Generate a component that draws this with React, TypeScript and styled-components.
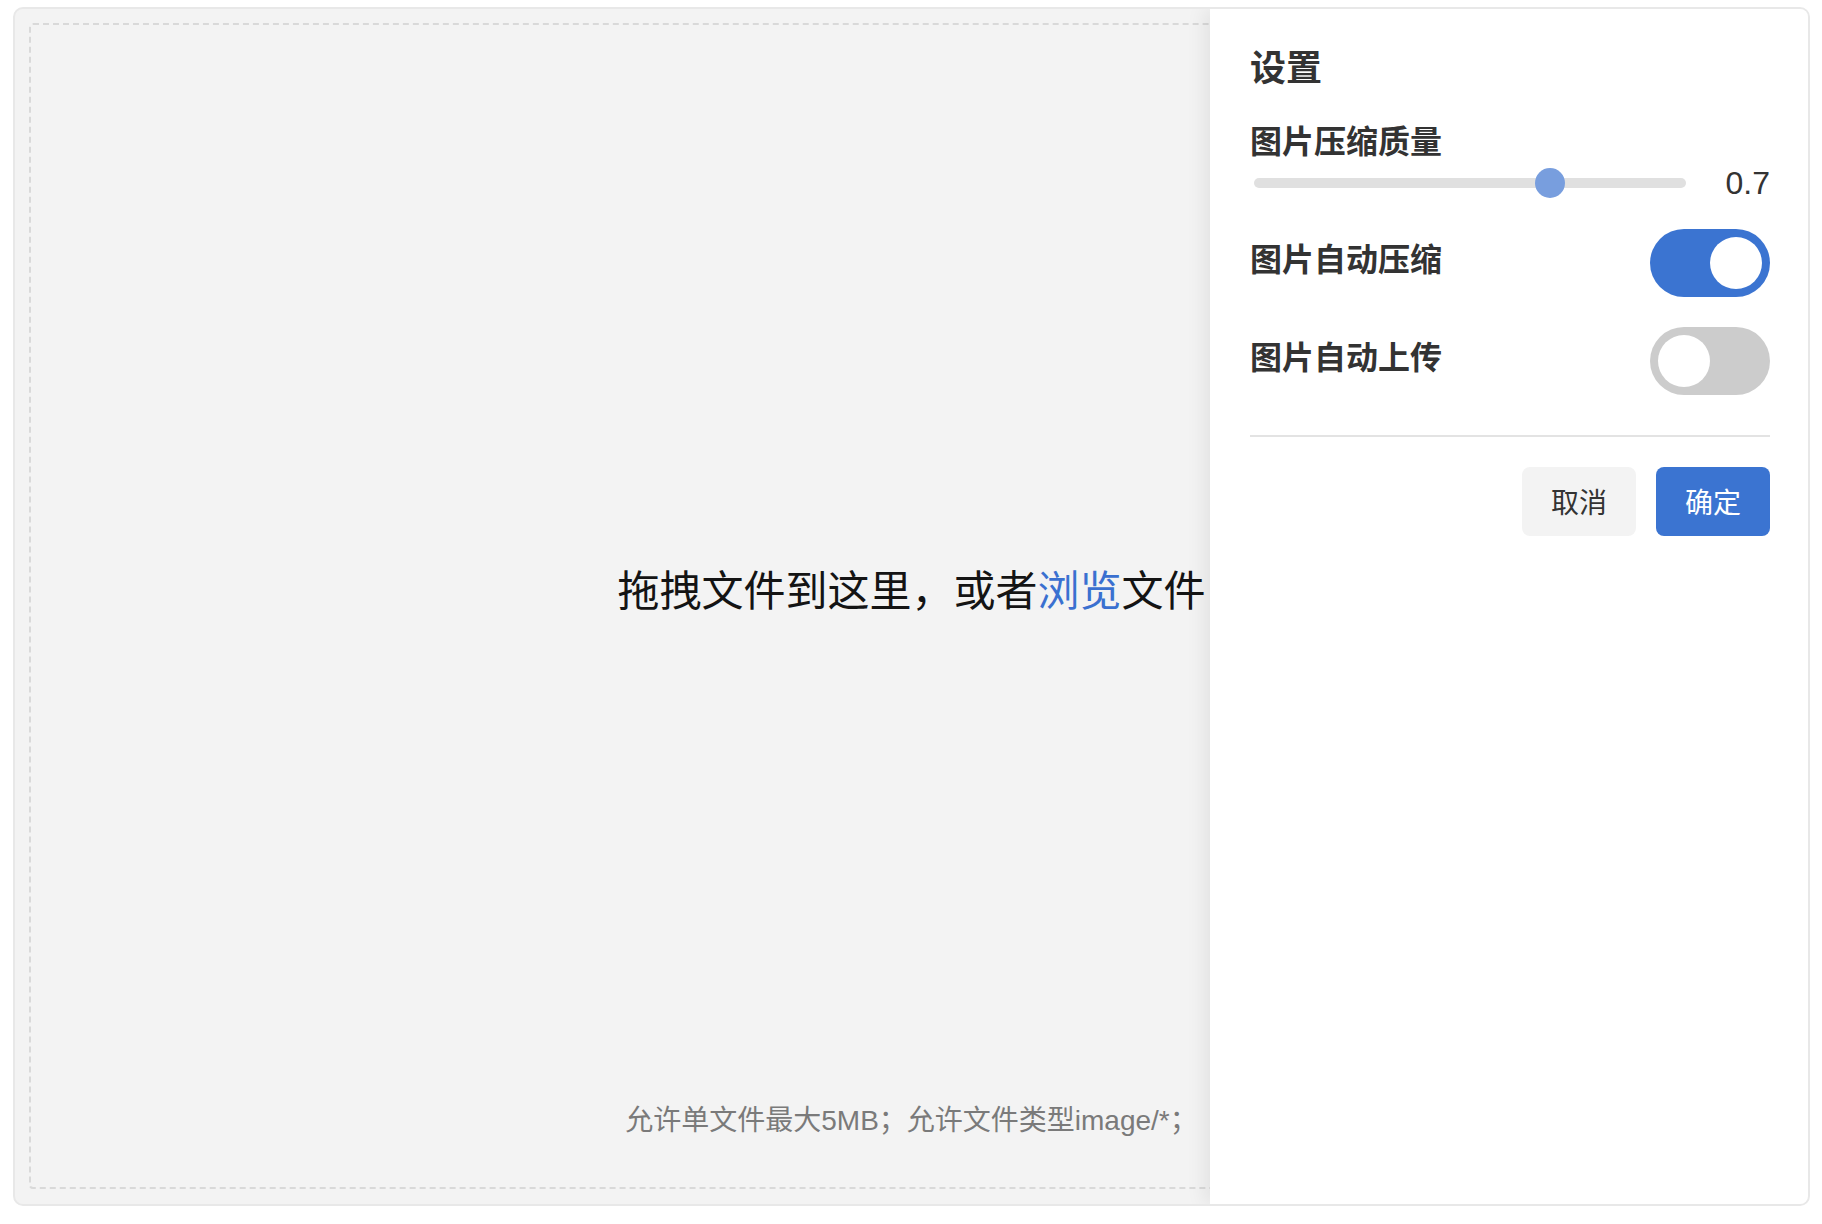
import React, { useState } from "react";
import styled, { createGlobalStyle } from "styled-components";

const GlobalStyle = createGlobalStyle`
  html, body { margin: 0; padding: 0; background: #ffffff; }
  body { font-family: "Liberation Sans", "Noto Sans CJK SC", "Noto Sans", sans-serif; }
  * { box-sizing: border-box; }
`;

const Page = styled.div`
  padding: 7px 12px 0 13px;
`;

const Frame = styled.div`
  position: relative;
  width: 1797px;
  height: 1199px;
  border: 2px solid #e8e8e8;
  border-radius: 10px;
  background: #f3f3f3;
  overflow: hidden;
  display: flex;
  padding: 14px 14px 15px 14px;
`;

const DropZone = styled.div`
  flex: 1;
  border: 2px dashed #d9d9d9;
  border-radius: 4px;
  display: grid;
  grid-template-rows: 1fr auto;
`;

const DropMain = styled.div`
  padding-top: 58px;
  display: flex;
  align-items: center;
  justify-content: center;
  font-size: 42px;
  line-height: 56px;
  color: #141414;
`;

const Link = styled.span`
  color: #3a70d0;
`;

const Hint = styled.div`
  padding-bottom: 46px;
  text-align: center;
  font-size: 28px;
  line-height: 40px;
  color: #7a7a7a;
`;

const Drawer = styled.aside`
  position: absolute;
  top: 0;
  right: 0;
  bottom: 0;
  width: 598px;
  background: #ffffff;
  box-shadow: -6px 0 18px rgba(0, 0, 0, 0.07);
  padding: 35px 38px 0 40px;
  display: flex;
  flex-direction: column;
`;

const Title = styled.h2`
  margin: 0;
  font-size: 36px;
  line-height: 50px;
  font-weight: 700;
  color: #333333;
`;

const Label = styled.div`
  font-size: 32px;
  line-height: 44px;
  font-weight: 600;
  color: #333333;
`;

const QualityLabel = styled(Label)`
  margin-top: 26px;
`;

const RowLabel = styled(Label)`
  padding-bottom: 7px;
`;

const SliderRow = styled.div`
  margin-top: 4px;
  height: 30px;
  display: flex;
  align-items: center;
  padding-left: 4px;
`;

const Track = styled.div`
  position: relative;
  flex: 1;
  height: 10px;
  border-radius: 5px;
  background: #e0e0e0;
`;

const Thumb = styled.div`
  position: absolute;
  top: 50%;
  width: 30px;
  height: 30px;
  margin-top: -15px;
  border-radius: 50%;
  background: #789ede;
`;

const Value = styled.div`
  width: 84px;
  text-align: right;
  font-size: 32px;
  line-height: 36px;
  color: #333333;
`;

const ToggleRow = styled.div<{ $gap: number }>`
  margin-top: ${(p) => p.$gap}px;
  display: flex;
  align-items: center;
  justify-content: space-between;
`;

const Toggle = styled.button<{ $on: boolean }>`
  width: 120px;
  height: 68px;
  border: none;
  border-radius: 34px;
  padding: 8px;
  margin: 0;
  cursor: pointer;
  display: flex;
  justify-content: ${(p) => (p.$on ? "flex-end" : "flex-start")};
  background: ${(p) => (p.$on ? "#3b74d1" : "#cccccc")};
`;

const Knob = styled.span`
  width: 52px;
  height: 52px;
  border-radius: 50%;
  background: #ffffff;
`;

const Divider = styled.hr`
  margin: 40px 0 0 0;
  border: none;
  height: 2px;
  background: #e3e3e3;
`;

const Actions = styled.div`
  margin-top: 30px;
  display: flex;
  justify-content: flex-end;
  gap: 20px;
`;

const Button = styled.button<{ $primary?: boolean }>`
  height: 69px;
  padding: 0 29px;
  border: none;
  border-radius: 8px;
  font-family: "Noto Sans CJK SC", sans-serif;
  font-size: 28px;
  line-height: 40px;
  padding-bottom: 2px;
  cursor: pointer;
  background: ${(p) => (p.$primary ? "#3b74d1" : "#f3f3f3")};
  color: ${(p) => (p.$primary ? "#ffffff" : "#333333")};
`;

export default function App() {
  const [quality] = useState(0.7);
  const [autoCompress, setAutoCompress] = useState(true);
  const [autoUpload, setAutoUpload] = useState(false);

  return (
    <Page>
      <GlobalStyle />
      <Frame>
        <DropZone>
          <DropMain>
            <span>
              拖拽文件到这里，或者<Link>浏览</Link>文件
            </span>
          </DropMain>
          <Hint>允许单文件最大5MB；允许文件类型image/*；</Hint>
        </DropZone>
        <Drawer>
          <Title>设置</Title>
          <QualityLabel>图片压缩质量</QualityLabel>
          <SliderRow>
            <Track>
              <Thumb style={{ left: `calc(${quality} * (100% - 30px))` }} />
            </Track>
            <Value>{quality}</Value>
          </SliderRow>
          <ToggleRow $gap={31}>
            <RowLabel>图片自动压缩</RowLabel>
            <Toggle $on={autoCompress} onClick={() => setAutoCompress(!autoCompress)}>
              <Knob />
            </Toggle>
          </ToggleRow>
          <ToggleRow $gap={30}>
            <RowLabel>图片自动上传</RowLabel>
            <Toggle $on={autoUpload} onClick={() => setAutoUpload(!autoUpload)}>
              <Knob />
            </Toggle>
          </ToggleRow>
          <Divider />
          <Actions>
            <Button>取消</Button>
            <Button $primary>确定</Button>
          </Actions>
        </Drawer>
      </Frame>
    </Page>
  );
}
